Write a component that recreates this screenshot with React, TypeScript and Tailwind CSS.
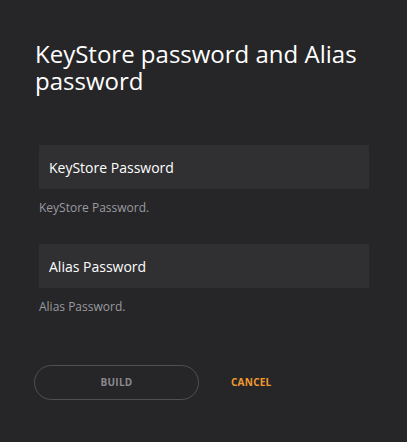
import React from "react";

interface FieldProps {
  label: string;
  hint: string;
}

const Field = ({ label, hint }: FieldProps) => {
  return (
    <div className="flex flex-col">
      <div className="h-[44px] bg-[#303032] flex items-center px-[10px] text-[14px] text-white">
        {label}
      </div>
      <div className="mt-[11px] text-[12px] leading-[16px] text-[#9a9aa0]">{hint}</div>
    </div>
  );
};

export default function App() {
  return (
    <div
      className="w-[407px] h-[442px] bg-[#262628] text-white"
      style={{ fontFamily: '"Open Sans", "Noto Sans", sans-serif' }}
    >
      <div className="pt-[40px] pl-[35px] pr-[30px]">
        <h1 className="text-[24px] leading-[27px] font-normal text-white">
          KeyStore password and Alias password
        </h1>
      </div>

      <div className="mt-[51px] ml-[39px] w-[330px] flex flex-col gap-[28px]">
        <Field label="KeyStore Password" hint="KeyStore Password." />
        <Field label="Alias Password" hint="Alias Password." />
      </div>

      <div className="mt-[50px] ml-[34px] flex items-center">
        <button className="w-[165px] h-[35px] rounded-full border border-[#505052] text-[10px] font-bold text-[#8a8a8e] tracking-wide">
          BUILD
        </button>
        <button className="ml-[32px] text-[10px] font-bold text-[#f39a2e] tracking-wide">
          CANCEL
        </button>
      </div>
    </div>
  );
}
